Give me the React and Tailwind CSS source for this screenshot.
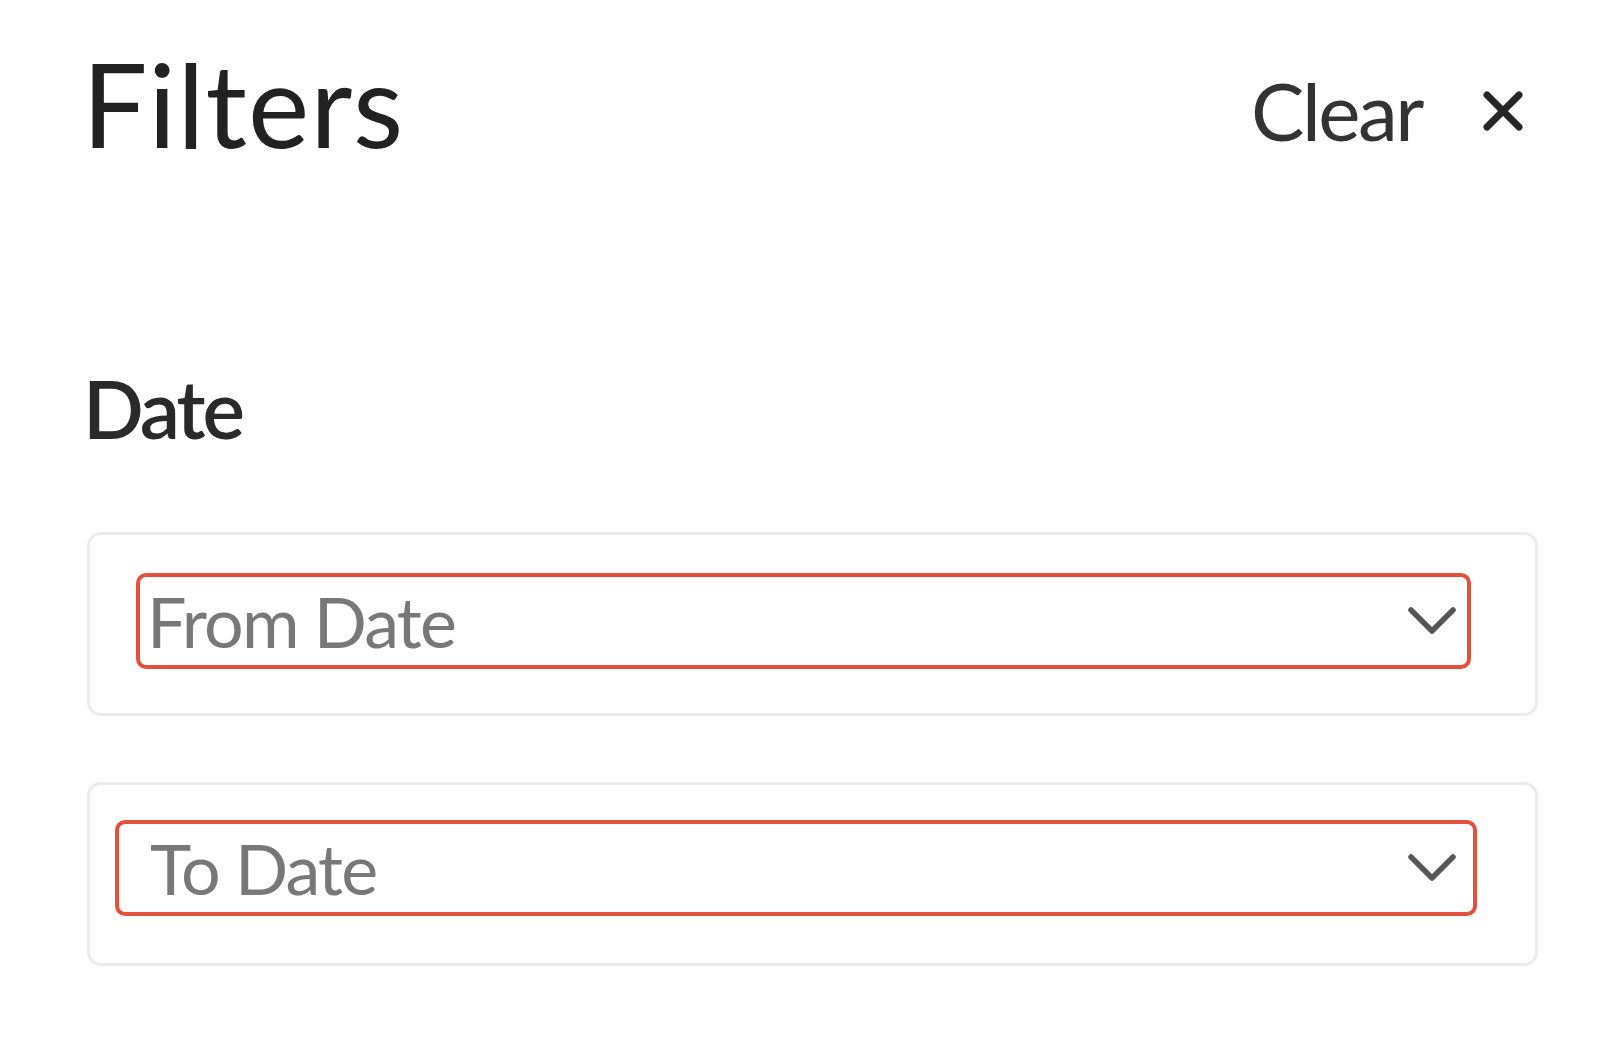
import React from "react";

function Chevron() {
	return (
		<svg width="50" height="30" viewBox="0 0 50 30" fill="none" className="shrink-0">
			<polyline points="4,4 25,25 46,4" stroke="#575757" strokeWidth="5.5" strokeLinecap="round" strokeLinejoin="round" />
		</svg>
	);
}

function DateField({ label, outer, inner }) {
	return (
		<div className={"rounded-[14px] border-[3px] border-[#ececec] h-[184px] flex flex-col " + outer}>
			<div className={"rounded-[10px] border-[4px] border-[#e4503b] h-[96px] flex items-center justify-between " + inner}>
				<span className="text-[70px] leading-none tracking-[-1.8px] text-[#787878]">{label}</span>
				<Chevron />
			</div>
		</div>
	);
}

export default function App() {
	return (
		<div className="min-h-screen bg-white pl-[87px] pr-[79px] pt-[46px]" style={{ fontFamily: "Lato, 'Open Sans', sans-serif" }}>
			<div className="flex justify-between items-start">
				<h1 className="text-[116px] leading-none tracking-[1px] text-[#222222] -ml-[5px]">Filters</h1>
				<div className="flex items-center gap-[60px] mt-[24px] pr-[14px]">
					<button className="text-[80px] leading-none tracking-[-2.5px] text-[#333333]">Clear</button>
					<svg width="42" height="42" viewBox="0 0 42 42" fill="none" className="mt-[2px]">
						<path d="M5 5 L37 37 M37 5 L5 37" stroke="#262626" strokeWidth="7" strokeLinecap="round" />
					</svg>
				</div>
			</div>

			<h2 className="mt-[206px] text-[80px] leading-none font-semibold tracking-[-3px] text-[#2a2a2a] -ml-[4px]">Date</h2>

			<div className="mt-[84px] flex flex-col gap-[66px]">
				<DateField label="From Date" outer="pt-[38px] pl-[46px] pr-[64px]" inner="pl-[7px] pr-[10px]" />
				<DateField label="To Date" outer="pt-[35px] pl-[25px] pr-[58px]" inner="pl-[31px] pr-[16px]" />
			</div>
		</div>
	);
}
